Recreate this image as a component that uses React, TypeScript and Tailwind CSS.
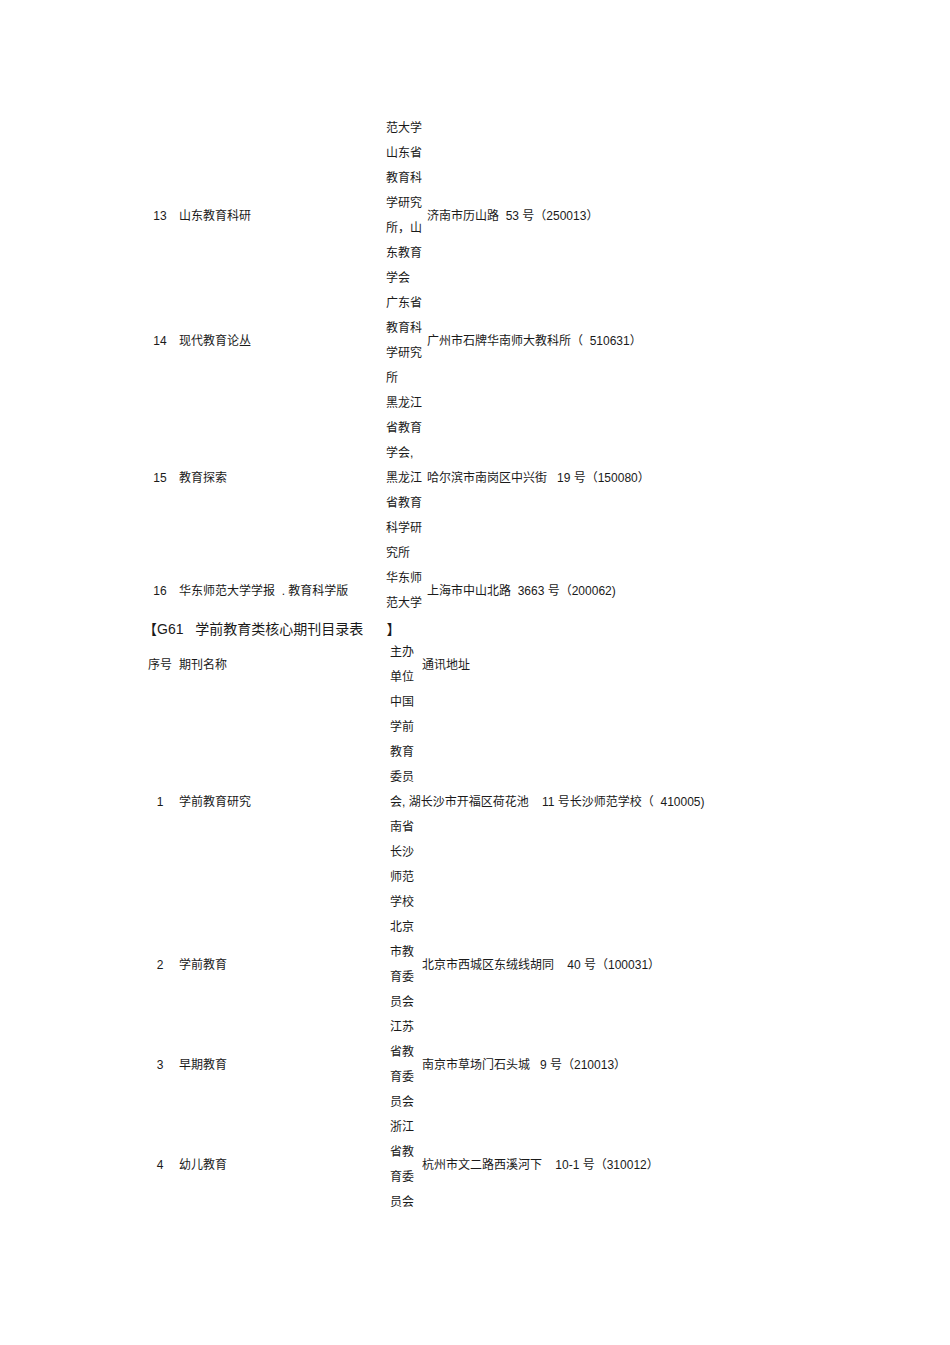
type Row = {
  num: string
  name: string
  org: string[]
  addr: string
}

const coreRows: Row[] = [
  { num: "", name: "", org: ["范大学"], addr: "" },
  {
    num: "13",
    name: "山东教育科研",
    org: ["山东省", "教育科", "学研究", "所，山", "东教育", "学会"],
    addr: "济南市历山路  53 号（250013）",
  },
  {
    num: "14",
    name: "现代教育论丛",
    org: ["广东省", "教育科", "学研究", "所"],
    addr: "广州市石牌华南师大教科所（  510631）",
  },
  {
    num: "15",
    name: "教育探索",
    org: ["黑龙江", "省教育", "学会,", "黑龙江", "省教育", "科学研", "究所"],
    addr: "哈尔滨市南岗区中兴街   19 号（150080）",
  },
  {
    num: "16",
    name: "华东师范大学学报  . 教育科学版",
    org: ["华东师", "范大学"],
    addr: "上海市中山北路  3663 号（200062)",
  },
]

const preschoolRows: Row[] = [
  { num: "序号", name: "期刊名称", org: ["主办", "单位"], addr: "通讯地址" },
  {
    num: "1",
    name: "学前教育研究",
    org: [
      "中国",
      "学前",
      "教育",
      "委员",
      "会, 湖长沙市开福区荷花池    11 号长沙师范学校（  410005)",
      "南省",
      "长沙",
      "师范",
      "学校",
    ],
    addr: "",
  },
  {
    num: "2",
    name: "学前教育",
    org: ["北京", "市教", "育委", "员会"],
    addr: "北京市西城区东绒线胡同    40 号（100031）",
  },
  {
    num: "3",
    name: "早期教育",
    org: ["江苏", "省教", "育委", "员会"],
    addr: "南京市草场门石头城   9 号（210013）",
  },
  {
    num: "4",
    name: "幼儿教育",
    org: ["浙江", "省教", "育委", "员会"],
    addr: "杭州市文二路西溪河下    10-1 号（310012）",
  },
]

function TableRow({ row, nameW, orgW }: { row: Row; nameW: string; orgW: string }) {
  return (
    <div className="flex items-center">
      <div className="w-[24px] shrink-0 text-center whitespace-nowrap">{row.num}</div>
      <div className={`${nameW} shrink-0 pl-[7px] whitespace-pre`}>{row.name}</div>
      <div className={`${orgW} shrink-0`}>
        {row.org.map((line, i) => (
          <div key={i} className="h-[25px] leading-[25px] whitespace-pre">
            {line}
          </div>
        ))}
      </div>
      <div className="whitespace-pre">{row.addr}</div>
    </div>
  )
}

export default function App() {
  return (
    <div
      className="w-[950px] min-h-[1345px] bg-white pt-[115.5px] pl-[148px] text-[12px] text-[#1a1a1a]"
      style={{ fontFamily: '"Liberation Sans", "Noto Sans CJK SC", sans-serif' }}
    >
      <div>
        {coreRows.map((row, i) => (
          <TableRow key={i} row={row} nameW="w-[214px]" orgW="w-[41px]" />
        ))}
      </div>

      <div className="-ml-[5px] h-[24px] leading-[26px] text-[14px] whitespace-pre">
        【G61   学前教育类核心期刊目录表      】
      </div>

      <div>
        {preschoolRows.map((row, i) => (
          <TableRow key={i} row={row} nameW="w-[218px]" orgW="w-[32px]" />
        ))}
      </div>
    </div>
  )
}
